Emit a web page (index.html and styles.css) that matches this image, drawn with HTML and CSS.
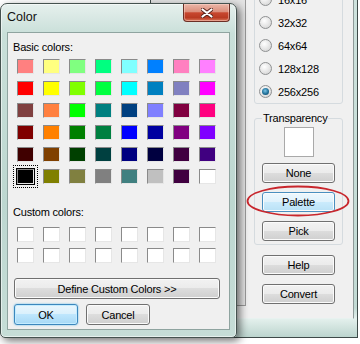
FILE: index.html
```html
<!DOCTYPE html>
<html lang="en">
<head>
  <meta charset="UTF-8">
  <meta name="viewport" content="width=device-width, initial-scale=1.0">
  <title>Color</title>
  <link rel="stylesheet" href="styles.css">
</head>
<body>
  <div class="main-window">
    <div class="main-client">
      <div class="canvas"></div>
      <div class="panel">
        <div class="group sizes">
          <label class="radio"><span class="dot"></span>16x16</label>
          <label class="radio"><span class="dot"></span>32x32</label>
          <label class="radio"><span class="dot"></span>64x64</label>
          <label class="radio"><span class="dot"></span>128x128</label>
          <label class="radio checked"><span class="dot"></span>256x256</label>
        </div>
        <fieldset class="group transparency">
          <legend>Transparency</legend>
          <div class="preview"></div>
          <button class="btn">None</button>
          <button class="btn hot">Palette</button>
          <button class="btn">Pick</button>
        </fieldset>
        <button class="btn help">Help</button>
        <button class="btn convert">Convert</button>
      </div>
    </div>
  </div>

  <div class="dialog">
    <div class="titlebar">
      <span class="title">Color</span>
      <span class="close">
        <svg width="12" height="10" viewBox="0 0 12 10">
          <path d="M1.5 1.5 L10.5 8.5 M10.5 1.5 L1.5 8.5" stroke="#5a241b" stroke-width="4" stroke-linecap="round"/>
          <path d="M1.5 1.5 L10.5 8.5 M10.5 1.5 L1.5 8.5" stroke="#fff" stroke-width="2.2" stroke-linecap="round"/>
        </svg>
      </span>
    </div>
    <div class="client">
      <div class="label">Basic colors:</div>
      <div class="swatches basic" id="basic"></div>
      <div class="label custom-label">Custom colors:</div>
      <div class="swatches custom" id="custom"></div>
      <button class="btn wide">Define Custom Colors &gt;&gt;</button>
      <div class="actions">
        <button class="btn default">OK</button>
        <button class="btn">Cancel</button>
      </div>
    </div>
  </div>

  <svg class="annotation" width="106" height="34" viewBox="0 0 106 34">
    <ellipse cx="53" cy="17" rx="50.5" ry="14.5" fill="none" stroke="#c8262c" stroke-width="1.8"/>
  </svg>

  <script>
    const basicColors = [
      "#ff8080", "#ffff80", "#80ff80", "#00ff80", "#80ffff", "#0080ff", "#ff80c0", "#ff80ff",
      "#ff0000", "#ffff00", "#80ff00", "#00ff40", "#00ffff", "#0080c0", "#8080c0", "#ff00ff",
      "#804040", "#ff8040", "#00ff00", "#008080", "#004080", "#8080ff", "#800040", "#ff0080",
      "#800000", "#ff8000", "#008000", "#008040", "#0000ff", "#0000a0", "#800080", "#8000ff",
      "#400000", "#804000", "#004000", "#004040", "#000080", "#000040", "#400040", "#400080",
      "#000000", "#808000", "#808040", "#808080", "#408080", "#c0c0c0", "#400040", "#ffffff"
    ];

    const basic = document.getElementById("basic");
    basicColors.forEach((color, i) => {
      const cell = document.createElement("span");
      cell.className = "swatch";
      if (i === 40) cell.classList.add("selected");
      cell.style.background = color;
      basic.appendChild(cell);
    });

    const custom = document.getElementById("custom");
    for (let i = 0; i < 16; i++) {
      const cell = document.createElement("span");
      cell.className = "swatch";
      custom.appendChild(cell);
    }
  </script>
</body>
</html>
```

FILE: styles.css
```css
body {
  margin: 0;
  width: 360px;
  height: 344px;
  position: relative;
  overflow: hidden;
  background-color: #fff;
  font-family: "Liberation Sans", Arial, sans-serif;
  font-size: 11px;
  letter-spacing: -0.2px;
  color: #000;
}

/* background window */
.main-window {
  position: absolute;
  left: 150px;
  top: -31px;
  width: 208px;
  height: 369px;
  box-sizing: border-box;
  border: 1px solid #3e4a48;
  padding: 0 3px 18px 0;
  background: linear-gradient(to bottom, #cfe3de, #c2dad4 92%, #e4f0ed 95%, #bcd5ce);
}

.main-client {
  display: flex;
  height: 348px;
  background-color: #f0f0f0;
  border-right: 1px solid #8e9b99;
  border-bottom: 1px solid #e8f2f0;
}

.canvas {
  width: 95px;
  height: 336px;
  box-sizing: border-box;
  background-color: #e4e4e4;
  border-right: 1px solid #9a9a9a;
  border-bottom: 1px solid #9a9a9a;
}

.panel {
  width: 107px;
  box-sizing: border-box;
  padding: 12px 0 0 8px;
}

.group {
  width: 89px;
  box-sizing: border-box;
  border: 1px solid #d5dbdf;
  border-radius: 3px;
}

.sizes {
  padding: 5px 0 0 4px;
}

.radio {
  display: flex;
  align-items: center;
  height: 23px;
  gap: 6px;
}

.dot {
  width: 13px;
  height: 13px;
  box-sizing: border-box;
  border-radius: 50%;
  border: 1px solid #8f9192;
  background: radial-gradient(circle at 40% 35%, #fff, #e2e2e2 60%, #cfcfcf);
  display: flex;
  align-items: center;
  justify-content: center;
}

.checked .dot::after {
  content: "";
  width: 7px;
  height: 7px;
  border-radius: 50%;
  background: radial-gradient(circle at 45% 40%, #7bc4e6, #1f6f98 55%, #0d3e5c);
}

.transparency {
  margin: 7px 0 0;
  padding: 0 7px 3px;
  min-inline-size: 0;
}

.transparency legend {
  padding: 0 1px;
  line-height: 14px;
}

.preview {
  width: 30px;
  height: 30px;
  box-sizing: border-box;
  margin: 2px auto 0;
  background-color: #fff;
  border: 1px solid #a9a9a9;
}

.btn {
  display: block;
  box-sizing: border-box;
  height: 20px;
  padding: 0;
  font-family: inherit;
  font-size: 11px;
  letter-spacing: -0.2px;
  color: #000;
  border: 1px solid #707070;
  border-radius: 3px;
  background: linear-gradient(#f2f2f2, #ebebeb 49%, #dddddd 50%, #cfcfcf);
  box-shadow: inset 0 0 0 1px #fbfbfb;
}

.panel .btn {
  width: 73px;
  margin: 9px 0 0;
}

.preview + .btn {
  margin-top: 6px;
}

.panel > .btn {
  margin-left: 8px;
}

.panel .help {
  margin-top: 10px;
}

.btn.hot {
  border-color: #4a8fc0;
  background: linear-gradient(#eef8fe, #e0f2fc 49%, #cbebfc 50%, #b9e1f6);
}

/* color dialog */
.dialog {
  position: absolute;
  left: 0;
  top: 3px;
  width: 237px;
  box-sizing: border-box;
  border: 1px solid #45524f;
  border-radius: 7px 7px 5px 5px;
  padding: 0 6px 7px;
  background: linear-gradient(to bottom, #e6f0ed, #c9dfd9 30px, #bdd7d0 60%, #c6ddd7);
  box-shadow: inset 0 0 0 1px rgba(255, 255, 255, 0.55), 3px 3px 9px rgba(0, 0, 0, 0.55);
}

.titlebar {
  display: flex;
  justify-content: space-between;
  align-items: flex-start;
  height: 28px;
}

.title {
  margin-top: 6px;
  line-height: 15px;
  font-size: 12.5px;
  letter-spacing: 0;
  color: #111;
}

.close {
  width: 47px;
  height: 18px;
  box-sizing: border-box;
  border: 1px solid #6b2f25;
  border-top: none;
  border-radius: 0 0 4px 4px;
  background: linear-gradient(#ebb6a8, #dc8f7c 45%, #c8472f 52%, #b93a22 80%, #d9765a);
  box-shadow: inset 0 0 0 1px rgba(255, 220, 210, 0.45);
  display: flex;
  align-items: center;
  justify-content: center;
}

.client {
  height: 298px;
  box-sizing: border-box;
  border: 1px solid #8fa4a0;
  background-color: #f0f0f0;
  padding: 7px 5px 0;
}

.label {
  line-height: 14px;
}

.custom-label {
  margin-top: 21px;
}

.swatches {
  display: grid;
  grid-template-columns: repeat(8, 17px);
  column-gap: 9px;
  row-gap: 7px;
  margin: 5px 0 0 4px;
}

.swatches.custom {
  margin-top: 8px;
  row-gap: 6px;
}

.swatch {
  height: 15px;
  box-sizing: border-box;
  border: 1px solid;
  border-color: #8a8a8a #e6e6e6 #e6e6e6 #8a8a8a;
  background-color: #fff;
}

.swatch.selected {
  box-shadow: 0 0 0 1px #000;
  outline: 1px dotted #000;
  outline-offset: 3px;
}

.btn.wide {
  width: 206px;
  height: 21px;
  margin: 15px 0 0 1px;
}

.actions {
  display: flex;
  gap: 8px;
  margin: 5px 0 0 1px;
}

.actions .btn {
  width: 64px;
  height: 21px;
}

.btn.default {
  border-color: #3c87bd;
  background: linear-gradient(#eaf6fd, #d9f0fc 49%, #bee6fd 50%, #a7d9f5);
  box-shadow: inset 0 0 0 1px #c4ecff, 0 0 2px #5ab7e8;
}

.annotation {
  position: absolute;
  left: 245px;
  top: 184px;
}
```
